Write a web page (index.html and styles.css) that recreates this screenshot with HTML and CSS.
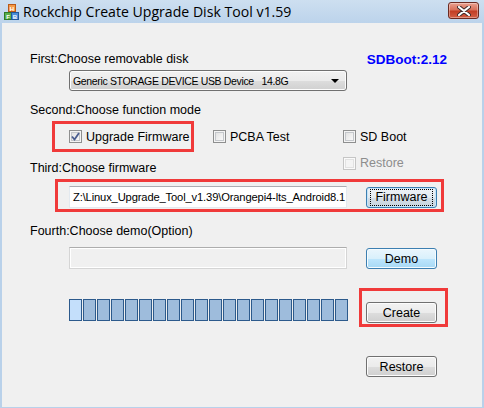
FILE: index.html
```html
<!DOCTYPE html>
<html lang="en">
<head>
  <meta charset="UTF-8" />
  <title>Rockchip Create Upgrade Disk Tool v1.59</title>
  <link rel="stylesheet" href="styles.css">
</head>
<body>
  <div class="window">
    <div class="titlebar">
      <svg class="app-icon" width="15" height="16" viewBox="0 0 15 16">
        <rect x="4.5" y="0.5" width="7" height="7" fill="#f59a45" stroke="#b85a1a"/>
        <text x="8" y="6.5" font-size="6" font-family="Liberation Sans" font-weight="bold" fill="#fff" text-anchor="middle">H</text>
        <rect x="0.5" y="8.5" width="7" height="7" fill="#5bb04a" stroke="#2e7a26"/>
        <text x="4" y="14.5" font-size="6" font-family="Liberation Sans" font-weight="bold" fill="#fff" text-anchor="middle">F</text>
        <rect x="7.5" y="8.5" width="7" height="7" fill="#4a8ed8" stroke="#23579a"/>
        <text x="11" y="14.5" font-size="6" font-family="Liberation Sans" font-weight="bold" fill="#fff" text-anchor="middle">B</text>
      </svg>
      <span class="title">Rockchip Create Upgrade Disk Tool v1.59</span>
      <div class="close">
        <svg width="14" height="10" viewBox="0 0 14 10">
          <path d="M2 1 L12 9 M12 1 L2 9" stroke="#3b2a2a" stroke-width="4" stroke-linecap="round"/>
          <path d="M2 1 L12 9 M12 1 L2 9" stroke="#fff" stroke-width="2.2" stroke-linecap="round"/>
        </svg>
      </div>
    </div>

    <div class="client">
      <div class="row row-head">
        <span class="label">First:Choose removable disk</span>
        <span class="sdboot">SDBoot:2.12</span>
      </div>

      <div class="row row-field">
        <div class="select">
          <span class="select-text">Generic STORAGE DEVICE USB Device   14.8G</span>
          <span class="arrow"></span>
        </div>
      </div>

      <div class="row row-label">
        <span class="label">Second:Choose function mode</span>
      </div>

      <div class="row row-checks">
        <div class="mark mark-upgrade">
          <label class="check">
            <span class="box checked">
              <svg width="9" height="9" viewBox="0 0 9 9"><path d="M1 4.5 L3.5 7.5 L8 1" fill="none" stroke="#4a5d8f" stroke-width="1.8"/></svg>
            </span>
            Upgrade Firmware
          </label>
        </div>
        <label class="check check-pcba"><span class="box"></span>PCBA Test</label>
        <label class="check"><span class="box"></span>SD Boot</label>
      </div>

      <div class="row row-third">
        <span class="label label-third">Third:Choose firmware</span>
        <label class="check disabled"><span class="box"></span>Restore</label>
      </div>

      <div class="row">
        <div class="mark mark-firmware">
          <div class="edit">Z:\Linux_Upgrade_Tool_v1.39\Orangepi4-lts_Android8.1</div>
          <div class="btn btn-default"><span class="focus">Firmware</span></div>
        </div>
      </div>

      <div class="row row-label4">
        <span class="label">Fourth:Choose demo(Option)</span>
      </div>

      <div class="row row-demo">
        <div class="edit edit-disabled"></div>
        <div class="btn btn-hot">Demo</div>
      </div>

      <div class="row row-progress">
        <div class="progress" id="progress"></div>
        <div class="mark mark-create">
          <div class="btn">Create</div>
        </div>
      </div>

      <div class="row row-restore">
        <div class="btn">Restore</div>
      </div>
    </div>
  </div>

  <script>
    const bar = document.getElementById("progress");
    for (let i = 0; i < 20; i++) {
      const block = document.createElement("span");
      block.className = i === 0 ? "block first" : "block";
      bar.appendChild(block);
    }
  </script>
</body>
</html>
```

FILE: styles.css
```css
:root {
  --frame: #b9d1ea;
  --face: #f0f0f0;
  --mark: #f03a3a;
  --font: 'Liberation Sans', Arial, sans-serif;
}
* {
  box-sizing: border-box;
}
body {
  margin: 0;
  font-family: var(--font);
  font-size: 12.5px;
  color: #000;
  background: var(--frame);
}
.window {
  width: 484px;
  height: 408px;
  display: flex;
  flex-direction: column;
  background: var(--frame);
}
.titlebar {
  height: 23px;
  display: flex;
  align-items: center;
  padding-left: 4px;
  background: linear-gradient(#cddff0, #bcd3eb);
}
.app-icon {
  flex: none;
  margin-top: 1px;
}
.title {
  margin-left: 4px;
  font-family: 'Open Sans', 'Noto Sans', sans-serif;
  font-size: 14.1px;
  color: #000;
  flex: 1;
}
.close {
  width: 31px;
  height: 17px;
  margin: 0 5px 2px 0;
  border: 1px solid #6b2a22;
  border-radius: 3px;
  background: linear-gradient(#e9a191 0%, #d8705a 45%, #c23e25 55%, #d35f45 100%);
  box-shadow: inset 0 0 0 1px rgba(255,255,255,0.35);
  display: flex;
  align-items: center;
  justify-content: center;
}
.client {
  flex: 1;
  margin: 0 2px 1px 2px;
  background: var(--face);
}
.row {
  display: flex;
}
.label {
  line-height: 14px;
  white-space: nowrap;
}
.row-head {
  margin-top: 29px;
  padding: 0 35px 0 28px;
  justify-content: space-between;
  align-items: center;
  height: 14px;
}
.sdboot {
  color: #0000ff;
  font-weight: bold;
  font-size: 13.5px;
}
.row-field {
  margin-top: 4px;
  padding-left: 67px;
}
.select {
  width: 278px;
  height: 21px;
  border: 1px solid #707070;
  border-radius: 3px;
  background: linear-gradient(#f2f2f2 0%, #ebebeb 50%, #dddddd 51%, #d0d0d0 100%);
  box-shadow: inset 0 0 0 1px #fcfcfc;
  display: flex;
  align-items: center;
  padding: 0 7px 0 3px;
}
.select-text {
  flex: 1;
  font-size: 10.5px;
  letter-spacing: -0.35px;
  white-space: pre;
}
.arrow {
  width: 0;
  height: 0;
  border-left: 4px solid transparent;
  border-right: 4px solid transparent;
  border-top: 4px solid #000;
}
.row-label {
  margin-top: 12px;
  padding-left: 28px;
}
.row-checks {
  margin-top: 4px;
  padding-left: 50px;
  align-items: center;
  height: 31px;
}
.mark {
  border: 3px solid var(--mark);
  display: flex;
}
.mark-upgrade {
  width: 142px;
  height: 31px;
  padding-left: 14px;
  align-items: center;
  margin-right: 19px;
}
.check {
  display: flex;
  align-items: center;
  gap: 4px;
  white-space: nowrap;
  line-height: 14px;
}
.check-pcba {
  width: 130px;
}
.box {
  width: 13px;
  height: 13px;
  border: 1px solid #8e8f8f;
  background: linear-gradient(135deg, #dcdcdc, #ffffff);
  box-shadow: inset 0 0 0 1px #f4f4f4, inset 0 0 0 2px #c4c7cb;
  display: flex;
  align-items: center;
  justify-content: center;
  flex: none;
}
.disabled {
  color: #8d8d8d;
}
.disabled .box {
  border-color: #c5c5c5;
  background: #f4f4f4;
  box-shadow: inset 0 0 0 1px #fafafa, inset 0 0 0 2px #e2e2e2;
}
.row-third {
  height: 27px;
  padding-left: 28px;
  align-items: flex-start;
}
.label-third {
  width: 313px;
  margin-top: 9px;
}
.row-third .check {
  margin-top: 4px;
}
.mark-firmware {
  margin-left: 53px;
  width: 389px;
  height: 33px;
  padding: 4px 0 0 11px;
  align-items: flex-start;
  gap: 19px;
}
.edit {
  width: 278px;
  height: 22px;
  background: #fff;
  border: 1px solid #e3e9ef;
  border-top-color: #abadb3;
  padding: 0 3px;
  font-size: 11.2px;
  letter-spacing: -0.15px;
  line-height: 20px;
  white-space: nowrap;
  overflow: hidden;
}
.edit-disabled {
  background: var(--face);
  border-color: #d5d5d5;
  border-top-color: #adadad;
  box-shadow: inset 0 0 0 1px #fff;
}
.btn {
  width: 71px;
  height: 21px;
  border: 1px solid #707070;
  border-radius: 3px;
  background: linear-gradient(#f2f2f2 0%, #ebebeb 50%, #dddddd 51%, #cfcfcf 100%);
  box-shadow: inset 0 0 0 1px #fcfcfc;
  display: flex;
  align-items: center;
  justify-content: center;
  font-size: 12.5px;
  flex: none;
}
.mark-firmware .btn {
  margin-top: 1px;
}
.btn-default {
  border-color: #3c7fb1;
  background: linear-gradient(#eef3f7 0%, #e3ebf1 50%, #d3dde6 51%, #c8d4de 100%);
  box-shadow: inset 0 0 0 1px #c5e4f8;
}
.focus {
  outline: 1px dotted #000;
  outline-offset: 1px;
  padding: 0 3px;
  line-height: 13px;
}
.btn-hot {
  border-color: #3c7fb1;
  background: linear-gradient(#eaf6fd 0%, #d9f0fc 50%, #bee6fd 51%, #a7d9f5 100%);
  box-shadow: inset 0 0 0 1px #f5fbfe;
}
.row-label4 {
  margin-top: 12px;
  padding-left: 28px;
}
.row-demo {
  margin-top: 9px;
  padding-left: 67px;
  gap: 19px;
  align-items: flex-start;
}
.row-demo .btn {
  margin-top: 1px;
}
.row-progress {
  margin-top: 19px;
  padding-left: 67px;
  align-items: flex-start;
  height: 39px;
}
.progress {
  margin-top: 11px;
  width: 280px;
  height: 22px;
  display: flex;
  gap: 1px;
}
.block {
  width: 13px;
  height: 22px;
  border: 1px solid #2c5a8c;
  background: #9ebcdc;
}
.block.first {
  background: #c4dffb;
}
.mark-create {
  margin-left: 10px;
  width: 89px;
  height: 39px;
  padding: 11px 0 0 4px;
}
.row-restore {
  margin-top: 29px;
  padding-left: 364px;
}
```
